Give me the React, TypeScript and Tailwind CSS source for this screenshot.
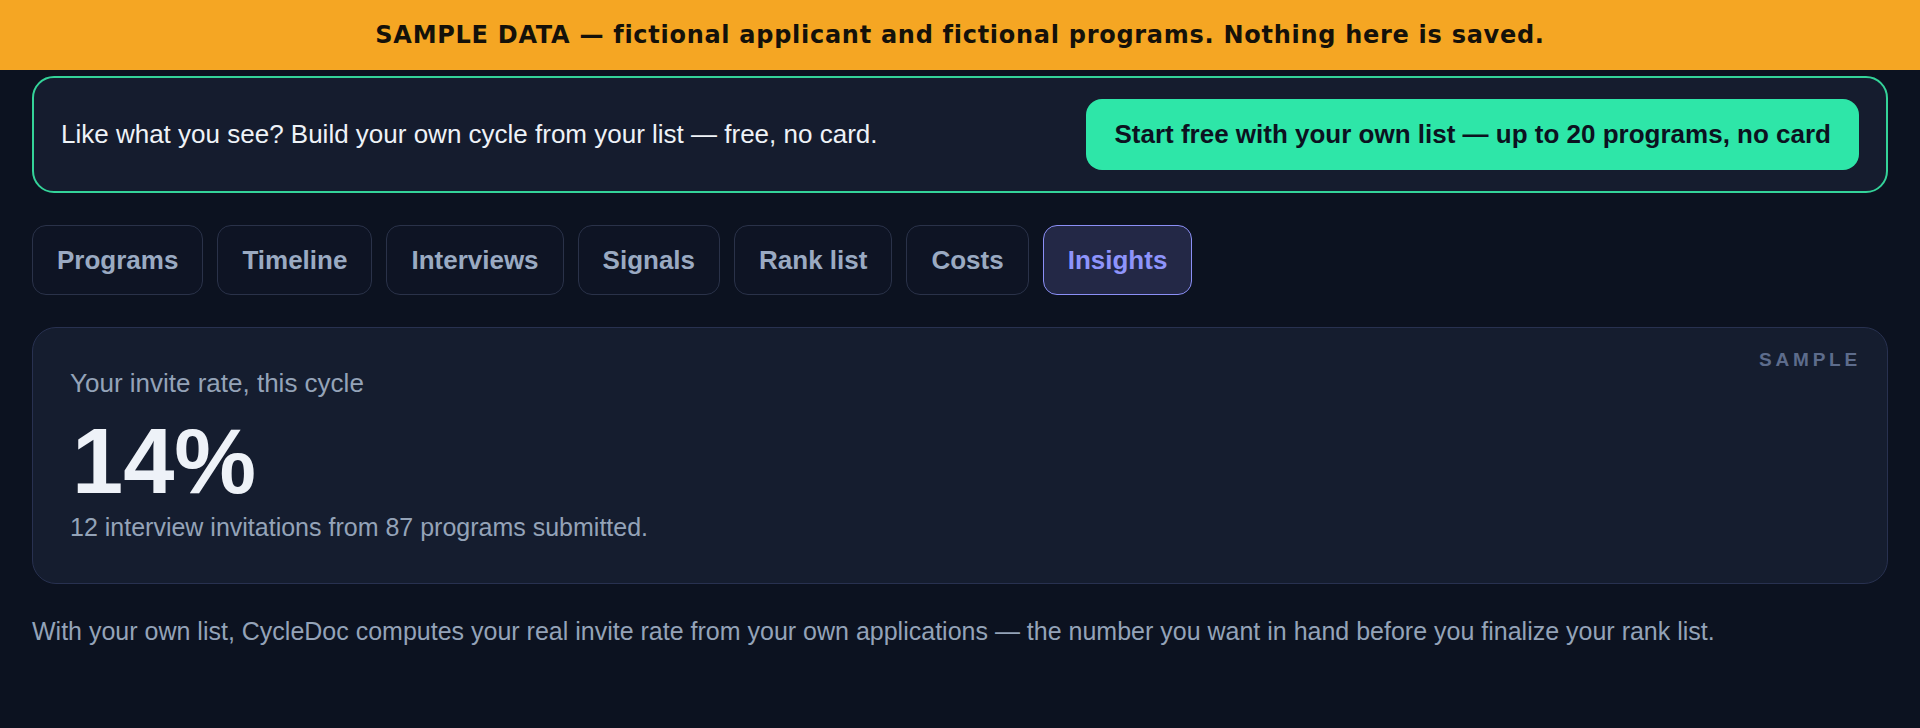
const tabs = ['Programs', 'Timeline', 'Interviews', 'Signals', 'Rank list', 'Costs', 'Insights'];

export default function App() {
  const active = 'Insights';

  return (
    <div className="min-h-[728px] w-full bg-[#0c1220] font-['Liberation_Sans',Arial,sans-serif]">
      <div className="h-[70px] bg-[#f5a623] flex items-center justify-center">
        <p className="font-['DejaVu_Sans',sans-serif] text-[24px] font-bold tracking-[0.03em] text-[#14110a]">
          SAMPLE DATA — fictional applicant and fictional programs. Nothing here is saved.
        </p>
      </div>

      <div className="px-8 pt-[6px] flex flex-col gap-[32px]">
        <div className="flex items-center justify-between rounded-[22px] border-2 border-[#34d399] bg-[#151c2e] px-[27px] py-[21px]">
          <p className="text-[26px] text-[#eef2f7]">
            Like what you see? Build your own cycle from your list — free, no card.
          </p>
          <button className="rounded-[16px] bg-[#2ee6a8] px-[28px] py-[18px] text-[26px] font-bold leading-[35px] text-[#0c1220]">
            Start free with your own list — up to 20 programs, no card
          </button>
        </div>

        <div className="flex gap-[14px]">
          {tabs.map((t) => (
            <button
              key={t}
              className={`rounded-[14px] border px-6 py-[16px] text-[26px] font-bold leading-[36px] ${
                t === active
                  ? 'border-[#8b8ff6] bg-[#232846] text-[#8e94fb]'
                  : 'border-[#2a3249] bg-[#0e1424] text-[#9aaac2]'
              }`}
            >
              {t}
            </button>
          ))}
        </div>

        <div className="relative rounded-[24px] border border-[#283150] bg-[#151d2f] pl-[37px] pr-10 pt-[40px] pb-[41px]">
          <span className="absolute right-[26px] top-[18px] text-[19px] font-black tracking-[0.2em] text-[#5d6c8c]">
            SAMPLE
          </span>
          <p className="text-[26px] leading-[30px] text-[#94a3b8]">Your invite rate, this cycle</p>
          <p className="mt-[17px] pl-[2px] text-[92px] font-bold leading-none text-[#eef2f8]">14%</p>
          <p className="mt-[5px] text-[25px] leading-[30px] text-[#94a3b8]">
            12 interview invitations from 87 programs submitted.
          </p>
        </div>

        <p className="text-[25px] leading-[30px] text-[#94a3b8]">
          With your own list, CycleDoc computes your real invite rate from your own applications — the number you want in hand before you finalize your rank list.
        </p>
      </div>
    </div>
  );
}
